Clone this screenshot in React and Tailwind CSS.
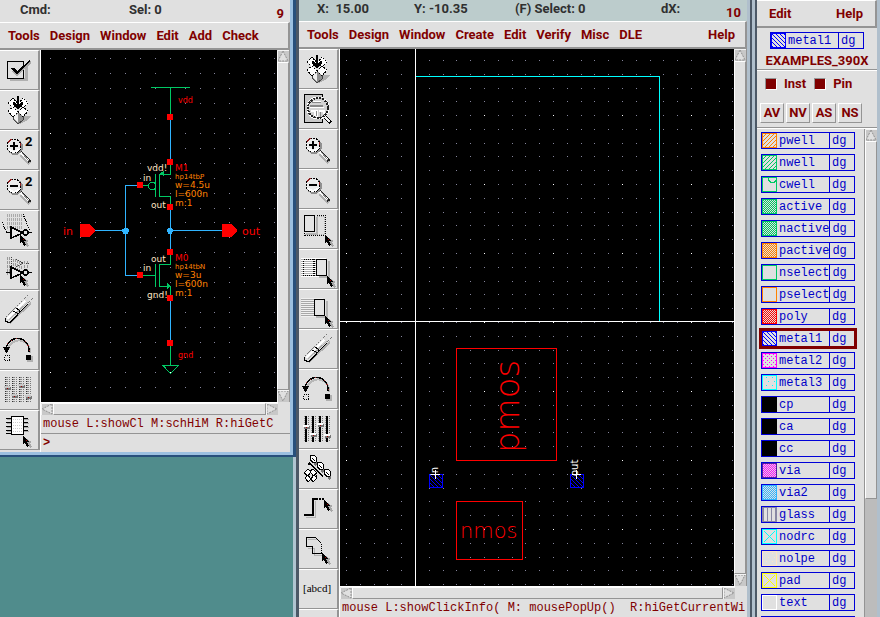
import { useState } from "react";

const UI_FONT = "font-[Roboto,sans-serif]";
const MONO_FONT = "font-['Liberation_Mono',monospace]";

/* ---------- toolbar icons, all on a 38x38 grid ---------- */

const Cursor = ({ x, y }) => (
  <g transform={`translate(${x} ${y})`}>
    <path d="M2 2l1 8 2-2 2 4 2-1-2-4 2-1z" fill="#a8a8a8" />
    <path d="M0 0v8l2-1 2 4 2-1-2-4h2z" fill="#000" />
    <rect x="3" y="4" width="1" height="1" fill="#a00000" />
  </g>
);

const CheckIcon = () => (
  <>
    <path d="M10 29.500h16.500V15" fill="none" stroke="#b0b0b0" strokeWidth="3" />
    <rect x="7.500" y="11.500" width="16" height="17" fill="#e0e0e0" stroke="#000" />
    <path d="M13 21l4 4 14-13" fill="none" stroke="#aaa" strokeWidth="2" />
    <path d="M11 18h3l3 3 6-5 7-6v1l-7 7-6 6h-1z" fill="#000" />
  </>
);

const PackageIcon = () => (
  <>
    <path d="M18 34l6-8 7 0-3 4-8 4z" fill="#b0b0b0" />
    <path d="M13 25l5-4 5 4v5l-5 4-5-5z" fill="#909090" stroke="#444" />
    <path d="M14 26l4-2v9l-4-4z" fill="#f0f0f0" />
    <g fill="#fff" stroke="#000" strokeDasharray="2 1">
      <path d="M8 13l5-5 5 6-5 4z" />
      <path d="M18 14l5-6 5 5-5 5z" />
      <path d="M8 21l5-4 5 5-5 5z" />
      <path d="M18 22l5-5 5 4-5 6z" />
    </g>
    <path d="M17 6h2v8l3-2h1v2l-5 6-5-6v-2h1l3 2z" fill="#000" />
  </>
);

const MagnifierIcon = ({ sign, squared }) => (
  <>
    <path d="M21 25l9 9" stroke="#b0b0b0" strokeWidth="3" />
    <path d="M20 21l10 11" stroke="#222" strokeWidth="3" />
    <path d="M19 21l10 10" stroke="#fff" strokeWidth="2" />
    <path d="M22 23l7 8" stroke="#888" />
    <circle cx="15" cy="17" r="7" fill="none" stroke="#909090" strokeWidth="2" />
    <circle cx="14" cy="16" r="7" fill="#ececec" stroke="#000" strokeDasharray="2 1" />
    <path d="M9 19a6 6 0 0 0 10 0" fill="none" stroke="#fff" strokeWidth="2" />
    <path d="M8 13a7 7 0 0 1 4-4M20 13l1 3" fill="none" stroke="#902020" />
    <rect x="10" y="15" width="8" height="2" fill="#000" />
    {sign === "+" && <rect x="13" y="12" width="2" height="8" fill="#000" />}
    {squared && (
      <text x="25" y="16" className="fill-black font-[Roboto,sans-serif] text-[13px] font-bold">
        2
      </text>
    )}
  </>
);

const FitIcon = () => (
  <>
    <rect x="5.500" y="5.500" width="18" height="28" fill="#c8c8c8" stroke="#000" />
    <path d="M23 25l9 9" stroke="#000" strokeWidth="4" />
    <path d="M23 25l8 8" stroke="#f4f4f4" strokeWidth="2" />
    <circle cx="19" cy="19" r="11" fill="none" stroke="#fff" />
    <circle cx="19" cy="19" r="10" fill="#d4d4d4" stroke="#222" strokeWidth="2" strokeDasharray="2 1" />
    <path d="M11 17h13M13 13h9" stroke="#888" strokeWidth="2" />
    <path d="M11 18.500h14M14 12h8" stroke="#fff" />
    <path d="M12 22h4v5M20 22h5v3M18 21v7" fill="none" stroke="#fff" strokeWidth="2" />
    <path d="M17 22v5M21 23v5" stroke="#888" />
  </>
);

const StretchIcon = () => (
  <>
    <path d="M7 24.500h11V8" fill="none" stroke="#b4b4b4" strokeWidth="2" />
    <rect x="5.500" y="6.500" width="10" height="16" fill="#e4e4e4" stroke="#000" />
    <path d="M18 6.500h8.500v20H5v-3" fill="none" stroke="#000" strokeDasharray="1 1" />
    <path d="M18 7.500h7.500v18H6" fill="none" stroke="#aaa" strokeDasharray="1 1" />
    <Cursor x={26} y={26} />
  </>
);

const stripes = (from, to) =>
  [10, 12, 14, 16, 18, 20, 22, 24, 26].map((y) => `M${from} ${y}.500H${to}`).join("");

const CopyIcon = () => (
  <>
    <rect x="2" y="9" width="25" height="19" fill="#fff" />
    <path d={stripes(2, 27)} stroke="#b0b0b0" />
    <rect x="4.500" y="10.500" width="11" height="16" fill="none" stroke="#000" strokeDasharray="1 1" />
    <path d="M14.500 10v17" stroke="#000" strokeDasharray="1 1" />
    <path d="M20 28h10V12" fill="none" stroke="#b4b4b4" strokeWidth="2" />
    <rect x="17.500" y="10.500" width="10" height="16" fill="#e4e4e4" stroke="#000" />
    <Cursor x={28} y={27} />
  </>
);

const MoveIcon = () => (
  <>
    <rect x="2" y="9" width="22" height="19" fill="#f0f0f0" />
    <path d={stripes(2, 15)} stroke="#a8a8a8" />
    <path d="M17 28h11V12" fill="none" stroke="#b4b4b4" strokeWidth="2" />
    <rect x="15.500" y="10.500" width="10" height="16" fill="#e4e4e4" stroke="#000" />
    <Cursor x={26} y={27} />
  </>
);

const EraserIcon = () => (
  <>
    <path d="M10 33L31 13" stroke="#b0b0b0" strokeWidth="2" />
    <path d="M6 27L23 10l7-4-1 5L11 30l-3 2-3-2z" fill="#dcdcdc" />
    <path d="M6 27L23 10" stroke="#777" strokeDasharray="2 1" />
    <path d="M7 29L25 11" stroke="#fff" strokeWidth="2" />
    <path d="M9 30L28 12" stroke="#aaa" />
    <path d="M5.500 28v3l2 1h3L28 14" fill="none" stroke="#000" />
    <path d="M13 21l4 2v3M16 18l3 2v3" fill="none" stroke="#000" />
    <path d="M24 9l4-4M28 13l5-5" stroke="#777" strokeDasharray="1 1" />
  </>
);

const UndoIcon = () => (
  <>
    <path d="M8 20a11 11 0 0 1 22 3" fill="none" stroke="#b8b8b8" strokeWidth="2" />
    <path d="M6 19a11.500 12 0 0 1 23 3" fill="none" stroke="#000" strokeWidth="1.500" />
    <path d="M6 19a11.500 12 0 0 1 23 3" fill="none" stroke="#a03030" strokeDasharray="1 4" />
    <path d="M3 17h7l-3 6H6z" fill="#000" />
    <rect x="4.500" y="25.500" width="5" height="5" fill="#e0e0e0" stroke="#000" strokeDasharray="1 1" />
    <rect x="27" y="26" width="6" height="6" fill="#b0b0b0" />
    <rect x="26" y="25" width="5" height="5" fill="#000" />
  </>
);

const SLIDERS = [
  [6, 16],
  [13, 24],
  [20, 14],
  [27, 25],
];

const SlidersIcon = ({ disabled }) => (
  <>
    {SLIDERS.map(([x, y]) => (
      <g key={x}>
        <path d={`M${x + 3}.500 7v26`} stroke={disabled ? "#777" : "#777"} strokeDasharray="1 1" />
        <path d={`M${x - 1}.500 7v26`} stroke={disabled ? "#333" : "#999"} strokeDasharray="1 1" />
        <path
          d={`M${x + 1} 7v26`}
          stroke={disabled ? "#8c8c8c" : "#000"}
          strokeWidth="2"
          strokeDasharray={disabled ? "1 1" : undefined}
        />
        <rect x={x - 1} y={y + 1} width="6" height="3" fill="#777" />
        <rect x={x - 2} y={y} width="6" height="2" fill={disabled ? "#c8c8c8" : "#fff"} />
        <rect x={x + 1} y={y + 2} width="1" height="1" fill="#a00000" />
      </g>
    ))}
  </>
);

const HierarchyIcon = () => (
  <>
    <path d="M10 14l14 13M10 14v2" fill="none" stroke="#000" strokeWidth="1.500" />
    {[
      [11, 6],
      [18, 13],
      [25, 20],
    ].map(([x, y]) => (
      <g key={x} transform={`translate(${x} ${y})`}>
        <path d="M4 8l3-4v5l-2 2z" fill="#777" />
        <path d="M0 1l4-1 3 3-1 4-3 1-3-4z" fill="#fff" stroke="#000" />
        <path d="M2 3l3 3" stroke="#000" />
      </g>
    ))}
    <path d="M13 22l5 5-4 6" fill="none" stroke="#000" />
    <g fill="#fff" stroke="#000">
      <path d="M5 24l4-4 3 3-3 4zM11 22l3-2 4 4-4 3z" />
      <path d="M6 29l3-3 3 4-3 3zM12 30l3-4 3 3-4 4z" />
    </g>
  </>
);

const PathIcon = () => (
  <>
    <path d="M7 28h9V12" fill="none" stroke="#b4b4b4" />
    <path d="M5 26h9V10h5" fill="none" stroke="#000" strokeWidth="2" />
    <path d="M20 10h6" stroke="#000" strokeWidth="2" strokeDasharray="2 1" />
    <Cursor x={25} y={11} />
  </>
);

const PolygonIcon = () => (
  <>
    <path d="M9 10.500h9M9 19h6v7h8" fill="none" stroke="#b4b4b4" />
    <path d="M22.500 24.500h-9v-7h-6v-9h9l6 6" fill="none" stroke="#000" />
    <path d="M22.500 15v10" stroke="#000" strokeDasharray="1 1" />
    <Cursor x={23} y={24} />
  </>
);

const LabelIcon = () => (
  <text x="4" y="23" className="fill-black font-['Liberation_Serif',serif] text-[11px]">
    [abcd]
  </text>
);

const GateIcon = () => (
  <>
    <path d="M11 17v11l12-5z" fill="#e8e8e8" stroke="#000" strokeWidth="1.500" />
    <circle cx="25.500" cy="22.500" r="2.500" fill="#e0e0e0" stroke="#000" strokeWidth="1.500" />
    <path d="M28 22.500h4M6 22.500h5" stroke="#000" />
  </>
);

const StretchGateIcon = () => (
  <>
    <path d="M7.500 4v16M9.500 4v14M11.500 4v12M13.500 4v14M15.500 4v15M17.500 4v16M19.500 4v17M21.500 4v16" stroke="#aaa" strokeDasharray="3 1" />
    <path d="M2 12l5 11M23 4l7 17" stroke="#000" strokeDasharray="1 1" />
    <GateIcon />
    <Cursor x={20} y={25} />
  </>
);

const CopyGateIcon = () => (
  <>
    <path d="M7.500 7v18M9.500 7v17M13.500 9v14M15.500 9v12M17.500 10v10M19.500 11v10M21.500 12v8M24.500 11v10M27.500 11v10" stroke="#999" strokeDasharray="3 1" />
    <path d="M11 7v12l12-6zM26 13h4" fill="none" stroke="#444" strokeDasharray="1 1" />
    <GateIcon />
    <Cursor x={20} y={25} />
  </>
);

const ChipIcon = () => (
  <>
    <path d="M7 9.500h5M7 13.500h5M7 17.500h5M7 21.500h5M24 9.500h5M24 13.500h5M24 17.500h5M24 21.500h5" stroke="#aaa" />
    <path d="M6 8.500h5M6 12.500h5M6 16.500h5M6 20.500h5M6 23.500h5M24 8.500h4M24 12.500h4M24 16.500h4M24 20.500h4" stroke="#000" />
    <rect x="11.500" y="6.500" width="12" height="18" fill="#fff" stroke="#000" />
    <path d="M13 9.500h10M13 12.500h10M13 15.500h10M13 18.500h10M13 21.500h10" stroke="#ccc" strokeDasharray="1 1" />
    <Cursor x={23} y={26} />
  </>
);

const SCHEMATIC_TOOLS = [
  ["Check and Save", <CheckIcon />],
  ["Save", <PackageIcon />],
  ["Zoom In by 2", <MagnifierIcon sign="+" squared />],
  ["Zoom Out by 2", <MagnifierIcon sign="-" squared />],
  ["Stretch", <StretchGateIcon />],
  ["Copy", <CopyGateIcon />],
  ["Delete", <EraserIcon />],
  ["Undo", <UndoIcon />],
  ["Property", <SlidersIcon disabled />],
  ["Component", <ChipIcon />],
];

const LAYOUT_TOOLS = [
  ["Save", <PackageIcon />],
  ["Fit Edit", <FitIcon />],
  ["Zoom In", <MagnifierIcon sign="+" />],
  ["Zoom Out", <MagnifierIcon sign="-" />],
  ["Stretch", <StretchIcon />],
  ["Copy", <CopyIcon />],
  ["Move", <MoveIcon />],
  ["Delete", <EraserIcon />],
  ["Undo", <UndoIcon />],
  ["Property", <SlidersIcon />],
  ["Instance", <HierarchyIcon />],
  ["Path", <PathIcon />],
  ["Polygon", <PolygonIcon />],
  ["Label", <LabelIcon />],
  ["Ruler", null],
];

/* ---------- shared window parts ---------- */

const Toolbar = ({ tools }) => (
  <div className="w-10 shrink-0 overflow-hidden bg-[#e0e0e0] pb-0.5">
    {tools.map(([label, icon]) => (
      <button
        key={label}
        type="button"
        aria-label={label}
        className="block h-10 w-full border-t border-r-2 border-b border-t-white border-r-[#949494] border-b-[#949494]"
      >
        <svg viewBox="0 1 38 38" width="38" height="38" shapeRendering="crispEdges" className="block">
          {icon}
        </svg>
      </button>
    ))}
  </div>
);

const MenuBar = ({ items, right, className = "" }) => (
  <nav
    className={`flex h-7 shrink-0 items-center gap-2.5 border-t border-r-2 border-b-2 border-t-white border-r-[#949494] border-b-[#949494] bg-[#e0e0e0] text-[13px] font-bold text-[#800000] ${className}`}
  >
    {items.map((item) => (
      <button key={item} type="button">
        {item}
      </button>
    ))}
    {right && (
      <button type="button" className="ml-auto">
        {right}
      </button>
    )}
  </nav>
);

const ARROWS = {
  up: "M6 1l5 10H1z",
  down: "M1 1h10L6 11z",
  left: "M11 1v10L1 6z",
  right: "M1 1l10 5-10 5z",
};

const ScrollArrow = ({ dir }) => (
  <button type="button" aria-label={`Scroll ${dir}`} className="size-3 shrink-0 bg-[#c8c8c8]">
    <svg viewBox="0 0 12 12" width="12" height="12" className="block">
      <path d={ARROWS[dir]} fill="#e0e0e0" stroke="#909090" strokeDasharray="2 1" />
      <path d="M.5 12V.5H12" fill="none" stroke="#f4f4f4" />
    </svg>
  </button>
);

const THUMB = "border border-t-white border-l-white border-r-[#949494] border-b-[#949494] bg-[#e0e0e0]";

const VScroll = () => (
  <div className="flex w-[13px] shrink-0 flex-col items-end border-r border-[#949494] bg-[#e0e0e0]">
    <ScrollArrow dir="up" />
    <div className={`w-3 flex-1 ${THUMB}`} />
    <ScrollArrow dir="down" />
  </div>
);

const HScroll = () => (
  <div className="mr-3 flex h-[13px] shrink-0 items-end border-t border-white bg-[#e0e0e0]">
    <ScrollArrow dir="left" />
    <div className={`h-3 flex-1 ${THUMB}`} />
    <ScrollArrow dir="right" />
  </div>
);

const Message = ({ children }) => (
  <p
    className={`h-[18px] shrink-0 overflow-hidden whitespace-pre px-0.5 text-xs leading-[18px] text-[#800000] ${MONO_FONT}`}
  >
    {children}
  </p>
);

const gridDots = (x0, y0, step, cols, rows, isMajor) => {
  let minor = "";
  let major = "";
  for (let i = 0; i < cols; i++) {
    for (let j = 0; j < rows; j++) {
      const dot = `M${Math.round(x0 + i * step)} ${Math.round(y0 + j * step)}h1v1h-1z`;
      if (isMajor(i, j)) major += dot;
      else minor += dot;
    }
  }
  return { minor, major };
};

const Dots = ({ dots }) => (
  <>
    <path d={dots.minor} fill="#85859c" />
    <path d={dots.major} fill="#fff" />
  </>
);

// one-pixel bitmap made of the cells of a w x h grid that pass the test
const bitmap = (w, h, test) => {
  let d = "";
  for (let y = 1; y < h - 1; y++) {
    for (let x = 1; x < w - 1; x++) {
      if (test(x, y)) d += `M${x} ${y}h1v1h-1z`;
    }
  }
  return d;
};

/* ---------- schematic window ---------- */

const schematicDots = gridDots(9, 8, 14.95, 60, 40, (i, j) => i % 8 === 0 && j % 8 === 5);

const PINS = [
  [167, 114],
  [167, 159],
  [137, 182],
  [167, 204],
  [167, 249],
  [137, 272],
  [167, 295],
  [167, 340],
];

const NETS = [
  [147, 171, "vdd!"],
  [143, 181, "in"],
  [151, 208, "out"],
  [151, 262, "out"],
  [143, 271, "in"],
  [147, 298, "gnd!"],
];

const PARAMS = [
  [179, "hp14tbP", true],
  [188, "w=4.5u"],
  [197, "l=600n"],
  [206, "m:1"],
  [269, "hp14tbN", true],
  [278, "w=3u"],
  [287, "l=600n"],
  [296, "m:1"],
];

const SchematicCanvas = () => (
  <svg
    className="min-w-0 flex-1 bg-black font-['DejaVu_Sans',sans-serif]"
    shapeRendering="crispEdges"
    role="img"
    aria-label="Inverter schematic"
  >
    <Dots dots={schematicDots} />
    <g transform="translate(-41 -50)">
      <g fill="none" stroke="#30b4ff">
        <path d="M170.500 120v40M170.500 210v40M170.500 300v41" />
        <path d="M95 230.500h30.500M137 185.500h-11.500v90H137M170 230.500h52" />
      </g>
      <g fill="none" stroke="#00c864">
        <path d="M151 87.500h39M170.500 87v27" />
        <path d="M170.500 165v9.500H159.500M159.500 174v22.500h11V204M155.500 174v23" />
        <path d="M143 185.500h5M148.500 184.500l2-2h3l2 1v5l-2 1h-3l-2-2z" />
        <path d="M170.500 255v9.500H159.500v22H170.500V295M155.500 264v23M143 275.500h12" />
        <path d="M170.500 346v19M163 365.500h15.500l-8 8z" />
      </g>
      <path d="M159 174l5-3v5zM171 286l-4-3v6z" fill="#00c864" />
      <g fill="#30b4ff">
        <path d="M124 228h4v1h1v3h-1v2h-5v-2h-1v-3h2zM168 228h4v1h1v3h-1v2h-4v-2h-1v-3h1z" />
      </g>
      <g fill="#f00">
        {PINS.map(([x, y]) => (
          <rect key={`${x}-${y}`} x={x} y={y} width="6" height="6" />
        ))}
        <path d="M80 224h9l6 5v3l-6 5h-9zM222 224h9l6 5v3l-6 5h-9z" />
      </g>
      <g className="fill-[#ff0000] text-[11px]">
        <text x="63" y="235">in</text>
        <text x="242" y="235">out</text>
      </g>
      <g className="fill-[#ff0000] text-[8px]">
        <text x="178" y="103">vdd</text>
        <text x="178" y="358">gnd</text>
      </g>
      <g className="fill-[#ff0000] text-[9px]">
        <text x="175" y="171">M1</text>
        <text x="175" y="261">M0</text>
      </g>
      <g className="fill-[#ffe4c4] text-[9px]">
        {NETS.map(([x, y, name]) => (
          <text key={`${name}-${y}`} x={x} y={y}>
            {name}
          </text>
        ))}
      </g>
      <g className="fill-[#ff8000]">
        {PARAMS.map(([y, value, small]) => (
          <text key={y} x="175" y={y} className={small ? "text-[7px]" : "text-[9px]"}>
            {value}
          </text>
        ))}
      </g>
    </g>
  </svg>
);

const SchematicWindow = () => (
  <section className="border-r-[3px] border-b-2 border-[#28507c]">
    <div className="flex flex-col border-r-[3px] border-b-[3px] border-[#9cc0e0] bg-[#e0e0e0]">
      <header className="grid h-[22px] grid-cols-[109px_1fr_auto] pr-1.5 pl-5 text-[13px] leading-5 font-bold text-[#303030]">
        <span>Cmd:</span>
        <span>Sel: 0</span>
        <span className="pt-1 text-[#800000]">9</span>
      </header>
      <MenuBar className="pl-2" items={["Tools", "Design", "Window", "Edit", "Add", "Check"]} />
      <div className="flex">
        <Toolbar tools={SCHEMATIC_TOOLS} />
        <div className="flex min-w-0 flex-1 flex-col border-l border-white">
          <div className="flex flex-1">
            <SchematicCanvas />
            <VScroll />
          </div>
          <HScroll />
          <Message>mouse L:showCl M:schHiM R:hiGetC</Message>
          <label
            className={`flex h-[19px] items-center border-t border-[#949494] px-0.5 text-xs font-bold text-[#800000] ${MONO_FONT}`}
          >
            &gt;
            <input aria-label="Command" className="min-w-0 flex-1 bg-transparent outline-none" />
          </label>
        </div>
      </div>
    </div>
  </section>
);

/* ---------- layout window ---------- */

const layoutDots = gridDots(6, 66, 13.8, 120, 80, (i, j) => i % 5 === 0 && j % 5 === 0);
const layoutTopDots = gridDots(6, 11, 13.8, 120, 4, () => false);
const contactHatch = bitmap(14, 14, (x, y) => (x - y + 16) % 4 === 0);

const ContactBox = ({ x }) => (
  <g transform={`translate(${x} 474)`}>
    <rect x=".5" y=".5" width="13" height="13" fill="none" stroke="#0000ff" />
    <path d={contactHatch} fill="#0000ff" />
  </g>
);

const LayoutCanvas = () => (
  <svg
    className="min-w-0 flex-1 bg-black font-['DejaVu_Sans',sans-serif] font-extralight"
    shapeRendering="crispEdges"
    role="img"
    aria-label="Inverter layout"
  >
    <Dots dots={layoutTopDots} />
    <Dots dots={layoutDots} />
    <path d="M75.500 0V2000M0 272.500H4000" stroke="#fff" />
    <g transform="translate(-340 -49)">
      <path d="M416 76.500h243.500V321" fill="none" stroke="#00ffff" />
      <ContactBox x={429} />
      <ContactBox x={570} />
      <g fill="none" stroke="#f00">
        <rect x="456.500" y="348.500" width="100" height="112" />
        <rect x="456.500" y="501.500" width="66" height="58" />
      </g>
      <text transform="translate(519 453) rotate(-90)" className="fill-[#ff0000] text-[34px]">
        pmos
      </text>
      <text x="460" y="538" className="fill-[#ff0000] text-[21px]">
        nmos
      </text>
      <path d="M431 474.500h9M435.500 470v9M572 474.500h9M576.500 470v9" stroke="#fff" />
      <g className="fill-white text-[10px] font-normal">
        <text transform="translate(438 476) rotate(-90)">in</text>
        <text transform="translate(578 476) rotate(-90)">out</text>
      </g>
    </g>
  </svg>
);

const LayoutWindow = () => (
  <section className="flex min-w-0 flex-1 flex-col border-r-[3px] border-l-[3px] border-r-[#b0bfcc] border-l-[#4c5866] bg-[#e0e0e0]">
    <header className="grid h-[21px] shrink-0 grid-cols-[97px_101px_146px_1fr_auto] bg-[#bccccc] pr-1.5 pl-[18px] text-[13px] leading-[18px] font-bold text-[#303030]">
      <span className="whitespace-pre">X:  15.00</span>
      <span>Y: -10.35</span>
      <span>(F) Select: 0</span>
      <span>dX:</span>
      <span className="pt-1 text-[#800000]">10</span>
    </header>
    <MenuBar
      className="pr-2.5 pl-2"
      items={["Tools", "Design", "Window", "Create", "Edit", "Verify", "Misc", "DLE"]}
      right="Help"
    />
    <div className="flex min-h-0 flex-1">
      <Toolbar tools={LAYOUT_TOOLS} />
      <div className="flex min-w-0 flex-1 flex-col border-l border-white">
        <div className="flex min-h-0 flex-1">
          <LayoutCanvas />
          <VScroll />
        </div>
        <HScroll />
        <Message>{"mouse L:showClickInfo( M: mousePopUp()  R:hiGetCurrentWi"}</Message>
      </div>
    </div>
  </section>
);

/* ---------- layer selection window ---------- */

const LAYERS = [
  { name: "pwell", color: "#ff8000", fill: "slash" },
  { name: "nwell", color: "#00c864", fill: "slash" },
  { name: "cwell", color: "#00c864", fill: "scallop" },
  { name: "active", color: "#00c864", fill: "dense" },
  { name: "nactive", color: "#00c864", fill: "dense" },
  { name: "pactive", color: "#ff8000", fill: "dense" },
  { name: "nselect", color: "#00c864", fill: "none" },
  { name: "pselect", color: "#ff8000", fill: "none" },
  { name: "poly", color: "#ff0000", fill: "dense" },
  { name: "metal1", color: "#0000ff", fill: "backslash" },
  { name: "metal2", color: "#ff00ff", fill: "dots" },
  { name: "metal3", color: "#00ffff", fill: "sparse" },
  { name: "cp", color: "#000000", fill: "solid" },
  { name: "ca", color: "#000000", fill: "solid" },
  { name: "cc", color: "#000000", fill: "solid" },
  { name: "via", color: "#ff00ff", edge: "#5020a0", fill: "dense" },
  { name: "via2", color: "#30b4ff", fill: "dense" },
  { name: "glass", color: "#8888a4", fill: "bars" },
  { name: "nodrc", color: "#00ffff", fill: "cross" },
  { name: "nolpe", color: "#ffe4c4", fill: "sparse" },
  { name: "pad", color: "#ffff00", fill: "cross" },
  { name: "text", color: "#ffffff", fill: "none" },
];

const FILLS = {
  slash: bitmap(15, 15, (x, y) => (x + y) % 4 === 0),
  backslash: bitmap(15, 15, (x, y) => (x - y + 16) % 4 === 0),
  scallop: "M6 1h1v2h1v1h1v1h3v-1h1v-1h2v1h-1v1h-1v1h-5v-1h-1v-1h-1z",
  dense: bitmap(15, 15, (x, y) => (x + y) % 2 === 0),
  dots: bitmap(15, 15, (x, y) => y % 2 === 1 && (x + y) % 4 === 0),
  sparse: bitmap(15, 15, (x, y) => y % 4 === 2 && (x + (y % 8)) % 6 === 0),
  solid: "M0 0h15v15H0z",
  bars: "M1 0h1v15H1zM5 0h1v15H5zM9 0h1v15H9zM13 0h1v15h-1z",
  cross: bitmap(15, 15, (x, y) => x > 1 && x < 13 && (x === y || x + y === 14)),
  none: "",
};

const Swatch = ({ layer }) => (
  <svg viewBox="0 0 15 15" width="15" height="15" shapeRendering="crispEdges" className="block shrink-0">
    <path d={FILLS[layer.fill]} fill={layer.color} />
    <rect x=".5" y=".5" width="14" height="14" fill="none" stroke={layer.edge || layer.color} />
  </svg>
);

const LayerRow = ({ layer, selected, onClick }) => (
  <button
    type="button"
    onClick={onClick}
    className={`flex h-[17px] w-[94px] items-stretch border border-[#0000d8] text-left text-xs leading-[16px] text-[#0000c8] ${MONO_FONT} ${
      selected ? "outline-3 -outline-offset-1 outline-[#800000]" : ""
    }`}
  >
    <Swatch layer={layer} />
    <span className="flex-1 pl-0.5">{layer.name}</span>
    <span className="w-[25px] shrink-0 border-l border-[#0000d8] pl-0.5">dg</span>
  </button>
);

const LayerWindow = () => {
  const [current, setCurrent] = useState("metal1");
  const [filters, setFilters] = useState({ Inst: true, Pin: true });
  const currentLayer = LAYERS.find((layer) => layer.name === current);

  return (
    <aside className="flex shrink-0 border-l-2 border-[#4c5866]">
      <div className="flex w-32 flex-col border-r-[3px] border-l-[3px] border-[#b0bfcc] bg-[#e0e0e0]">
        <div className="flex min-h-0 flex-1 flex-col border-l-2 border-[#4c5866]">
          <MenuBar className="px-3" items={["Edit"]} right="Help" />
          <div className="flex h-[42px] shrink-0 flex-col items-center border-b border-[#949494] pt-1">
            <LayerRow layer={currentLayer} />
            <p className="pt-0.5 text-[13px] leading-5 font-bold text-[#800000]">EXAMPLES_390X</p>
          </div>
          <div className="flex h-[30px] shrink-0 items-center gap-2 border-t border-white pb-1 pl-2 text-[13px] font-bold text-[#800000]">
            {Object.keys(filters).map((name) => (
              <label key={name} className="flex items-center gap-[7px]">
                <input
                  type="checkbox"
                  checked={filters[name]}
                  onChange={() => setFilters({ ...filters, [name]: !filters[name] })}
                  className="size-3 appearance-none border border-t-[#949494] border-r-white border-b-white border-l-[#949494] checked:bg-[#800000]"
                />
                {name}
              </label>
            ))}
          </div>
          <div className="flex h-7 shrink-0 items-start gap-0.5 border-b border-[#949494] px-[3px] pt-[3px]">
            {["AV", "NV", "AS", "NS"].map((name) => (
              <button
                key={name}
                type="button"
                className="h-5 w-6 border border-t-white border-r-[#949494] border-b-[#949494] border-l-white text-[13px] leading-[18px] font-bold text-[#800000]"
              >
                {name}
              </button>
            ))}
          </div>
          <div className="flex min-h-0 flex-1 justify-between border-t border-white">
            <ul className="flex flex-col gap-[5px] overflow-hidden pt-[3px] pr-1 pl-1">
              {LAYERS.map((layer) => (
                <li key={layer.name}>
                  <LayerRow
                    layer={layer}
                    selected={layer.name === current}
                    onClick={() => setCurrent(layer.name)}
                  />
                </li>
              ))}
              <li className="h-[17px] w-[94px] shrink-0 border border-[#0000d8]" />
            </ul>
            <div className="flex w-[13px] shrink-0 flex-col items-end border-l border-[#949494] bg-[#bcbcbc]">
              <ScrollArrow dir="up" />
              <div className={`w-3 flex-3 ${THUMB}`} />
              <div className="flex-1" />
            </div>
          </div>
        </div>
      </div>
    </aside>
  );
};

export default function App() {
  return (
    <main className={`flex h-screen overflow-hidden bg-[#508c8c] ${UI_FONT}`}>
      <div className="flex w-[296px] shrink-0 flex-col">
        <SchematicWindow />
        <div className="flex-1 border-r-[3px] border-[#b0c4d0]" />
      </div>
      <LayoutWindow />
      <LayerWindow />
    </main>
  );
}
